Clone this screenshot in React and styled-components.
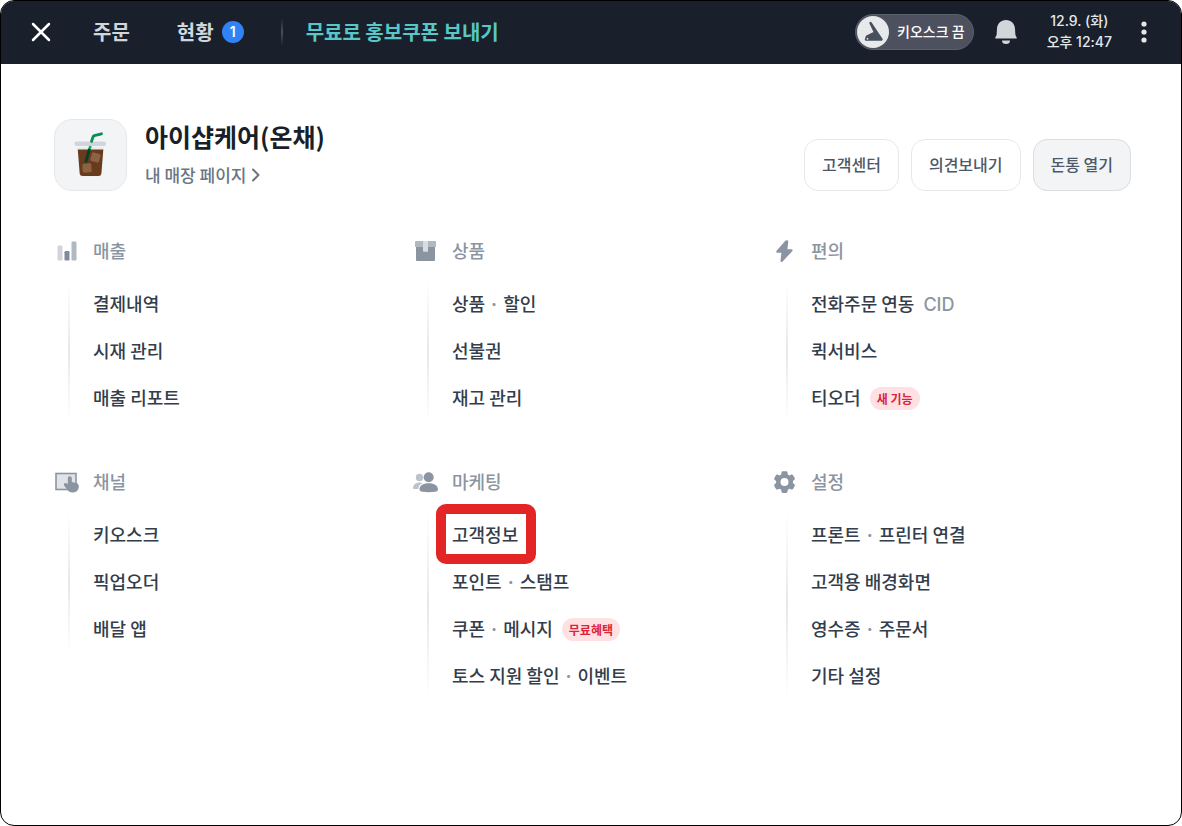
import React from "react";
import styled, { createGlobalStyle } from "styled-components";

const menus = [
    {
        name: "매출",
        icon: "sales",
        items: [{ label: ["결제내역"] }, { label: ["시재 관리"] }, { label: ["매출 리포트"] }],
    },
    {
        name: "상품",
        icon: "product",
        items: [{ label: ["상품", "할인"] }, { label: ["선불권"] }, { label: ["재고 관리"] }],
    },
    {
        name: "편의",
        icon: "bolt",
        items: [
            { label: ["전화주문 연동"], note: "CID" },
            { label: ["퀵서비스"] },
            { label: ["티오더"], badge: "새 기능" },
        ],
    },
    {
        name: "채널",
        icon: "channel",
        items: [{ label: ["키오스크"] }, { label: ["픽업오더"] }, { label: ["배달 앱"] }],
    },
    {
        name: "마케팅",
        icon: "people",
        items: [
            { label: ["고객정보"], marked: true },
            { label: ["포인트", "스탬프"] },
            { label: ["쿠폰", "메시지"], badge: "무료혜택" },
            { label: ["토스 지원 할인", "이벤트"] },
        ],
    },
    {
        name: "설정",
        icon: "gear",
        items: [
            { label: ["프론트", "프린터 연결"] },
            { label: ["고객용 배경화면"] },
            { label: ["영수증", "주문서"] },
            { label: ["기타 설정"] },
        ],
    },
];

const icons = {
    sales: (
        <>
            <rect x="3.500" y="5.500" width="5" height="15" rx="1.200" fill="#d1d5db" />
            <rect x="10.500" y="11" width="5" height="9.500" rx="1.200" fill="#7f8b99" />
            <rect x="17.500" y="1.500" width="5" height="19" rx="1.200" fill="#b0b8c1" />
        </>
    ),
    product: (
        <>
            <path d="M3 7h19v13a1 1 0 0 1-1 1H4a1 1 0 0 1-1-1z" fill="#8b95a1" />
            <path d="M3 1h19a1 1 0 0 1 1 1v5H2V2a1 1 0 0 1 1-1z" fill="#b0b8c1" />
            <path d="M10 1h5v10a.7.7 0 0 1-.7.7h-3.6a.7.7 0 0 1-.7-.7z" fill="#d9dde2" />
        </>
    ),
    bolt: (
        <path
            d="M13.400 .8 4.600 10.800c-.7.900-.3 1.900.9 1.900h3.900l-.9 8c-.1 1.400 1.200 1.900 2.100.9l9.600-10.400c.8-.9.4-2-.8-2h-4l.9-7.500c.1-1.500-1.800-2-2.900-.9z"
            fill="#8b95a1"
        />
    ),
    channel: (
        <>
            <rect x="2" y="2.500" width="20" height="16" fill="#e0e3e8" stroke="#8b95a1" strokeWidth="1.600" />
            <path
                d="M15.800 5.300c1.200 0 2 .8 2 2v3.800l4.300.9c1.700.4 2.700 1.400 2.700 3.100 0 4.200-2.200 6.400-6 6.400-2.800 0-4.400-1-5.700-2.900l-3-4.200c-1-1.500.8-3.100 2.300-2.100l1.400 1V7.300c0-1.200.8-2 2-2z"
                fill="#8b95a1"
            />
        </>
    ),
    people: (
        <>
            <circle cx="6.500" cy="6.500" r="3.700" fill="#bcc3cb" />
            <path d="M0 17.500c0-3.800 2.500-6 6.600-6 1.200 0 2.300.2 3.200.6-2.700 1.200-4.300 3-4.500 5.900H.5z" fill="#bcc3cb" />
            <circle cx="15.700" cy="6.200" r="5" fill="#8b95a1" />
            <path d="M6.500 18.500c0-4 3.400-6.300 9.200-6.300s9.300 2.300 9.300 6.300c0 1.300-1 2-3 2.300-4 .7-9 .6-12.500 0-2-.3-3-1-3-2.300z" fill="#8b95a1" />
        </>
    ),
    gear: (
        <path
            fillRule="evenodd"
            d="M10.800.3h3.400c.7 0 1.200.5 1.300 1.200l.3 1.900c.6.2 1.200.6 1.700 1l1.900-.8c.6-.2 1.300 0 1.600.6l1.700 2.900c.3.600.2 1.300-.3 1.700l-1.500 1.200v2.100l1.500 1.200c.5.4.6 1.100.3 1.700l-1.700 2.900c-.3.600-1 .8-1.600.6l-1.900-.7c-.5.4-1.100.8-1.700 1l-.3 1.900c-.1.700-.6 1.200-1.300 1.200h-3.400c-.7 0-1.200-.5-1.300-1.200l-.3-1.900c-.6-.2-1.200-.6-1.700-1l-1.900.7c-.6.2-1.300 0-1.600-.6L2.300 15c-.3-.6-.2-1.300.3-1.700l1.500-1.200V10L2.600 8.800c-.5-.4-.6-1.100-.3-1.700L4 4.200c.3-.6 1-.8 1.600-.6l1.900.8c.5-.4 1.100-.8 1.700-1l.3-1.900C9.600.8 10.100.3 10.800.3zM12.500 7.100a4 4 0 1 0 0 8 4 4 0 0 0 0-8z"
            fill="#8b95a1"
        />
    ),
};

const DrinkIcon = () => (
    <svg width="36" height="48" viewBox="0 0 36 48" aria-hidden="true">
        <path d="M4 16h27l-2.300 27a3 3 0 0 1-3 2.500H9.300a3 3 0 0 1-3-2.500z" fill="#e9ecef" />
        <path d="M4.800 18.500h25.500l-1.900 24a3 3 0 0 1-3 2.500H9.700a3 3 0 0 1-3-2.500z" fill="#683b1f" />
        <rect x="18" y="22" width="9" height="9" rx="1.500" fill="#8d6243" transform="rotate(15 22.500 26.500)" />
        <rect x="9.500" y="32.500" width="9" height="9" rx="1.500" fill="#8d6243" transform="rotate(-4 14 37)" />
        <rect x="1.500" y="10.500" width="31.500" height="4.500" rx="2.200" fill="#d1d5db" />
        <path d="M18.500 10.500 20 6q.3-1 1.300-1.300L28.500 2.800" fill="none" stroke="#0b8f55" strokeWidth="2.800" strokeLinecap="round" />
        <path d="M17.400 15 16.200 19.500" stroke="#16b167" strokeWidth="2.800" />
        <path d="M16.200 19 13 30.500" stroke="#053f28" strokeWidth="2.800" strokeLinecap="round" />
    </svg>
);

const MenuSection = ({ name, icon, items }) => (
    <section>
        <SectionTitle>
            <svg width="25" height="24" viewBox="0 0 25 22" aria-hidden="true">
                {icons[icon]}
            </svg>
            <SectionName>{name}</SectionName>
        </SectionTitle>
        <SectionBody>
            <Rail />
            <List>
                {items.map(({ label, note, badge, marked }) => (
                    <Item key={label[0]}>
                        <ItemLink href="#" $marked={marked}>
                            {label.map((part, index) => (
                                <React.Fragment key={part}>
                                    {index > 0 && <Dot>·</Dot>}
                                    {part}
                                </React.Fragment>
                            ))}
                        </ItemLink>
                        {note && <Note>{note}</Note>}
                        {badge && <Badge>{badge}</Badge>}
                    </Item>
                ))}
            </List>
        </SectionBody>
    </section>
);

const App = () => {
    return (
        <>
            <GlobalStyle />
            <Frame>
                <Header>
                    <IconButton aria-label="닫기">
                        <svg width="20" height="20" viewBox="0 0 20 20">
                            <path d="M2 2l16 16M18 2 2 18" stroke="#fff" strokeWidth="2.500" strokeLinecap="round" />
                        </svg>
                    </IconButton>
                    <Nav>
                        <NavLink href="#">주문</NavLink>
                        <NavLink href="#">
                            현황 <Count>1</Count>
                        </NavLink>
                    </Nav>
                    <Divider />
                    <NavLink href="#" $promo>
                        무료로 홍보쿠폰 보내기
                    </NavLink>
                    <Tools>
                        <KioskButton>
                            <svg width="32" height="32" viewBox="0 0 32 32" aria-hidden="true">
                                <circle cx="16" cy="16" r="16" fill="#e8e9eb" />
                                <path
                                    d="M13.500 7 24.500 23.500H9L10 20.500 18 16.500z"
                                    fill="#47505e"
                                    stroke="#47505e"
                                    strokeWidth="2.400"
                                    strokeLinejoin="round"
                                />
                                <circle cx="10.500" cy="22.800" r="0.900" fill="#e8e9eb" />
                            </svg>
                            <span>키오스크 끔</span>
                        </KioskButton>
                        <IconButton aria-label="알림">
                            <svg width="24" height="26" viewBox="0 0 24 26">
                                <path
                                    d="M12 1c5.200 0 8.700 3.600 9 8.700l.4 6.300 1.300 2.400c.3.600 0 1.100-.6 1.100H1.900c-.6 0-.9-.5-.6-1.100L2.600 16 3 9.700C3.300 4.600 6.800 1 12 1z"
                                    fill="#d1d6db"
                                />
                                <path d="M8 21.500h8a4 3.500 0 0 1-8 0z" fill="#d1d6db" />
                            </svg>
                        </IconButton>
                        <Clock>
                            12.9. (화)
                            <br />
                            오후 12:47
                        </Clock>
                        <IconButton aria-label="더보기">
                            <svg width="6" height="22" viewBox="0 0 6 22">
                                <circle cx="3" cy="3" r="2.600" fill="#e5e8eb" />
                                <circle cx="3" cy="11" r="2.600" fill="#e5e8eb" />
                                <circle cx="3" cy="19" r="2.600" fill="#e5e8eb" />
                            </svg>
                        </IconButton>
                    </Tools>
                </Header>
                <Main>
                    <Profile>
                        <Logo>
                            <DrinkIcon />
                        </Logo>
                        <div>
                            <StoreName>아이샵케어(온채)</StoreName>
                            <StoreLink href="#">
                                내 매장 페이지
                                <svg width="10" height="14" viewBox="0 0 10 14" aria-hidden="true">
                                    <path d="M2 1.500 7.500 7 2 12.500" fill="none" stroke="#6b7684" strokeWidth="2" strokeLinecap="round" strokeLinejoin="round" />
                                </svg>
                            </StoreLink>
                        </div>
                        <Actions>
                            <ActionButton>고객센터</ActionButton>
                            <ActionButton>의견보내기</ActionButton>
                            <ActionButton $filled>돈통 열기</ActionButton>
                        </Actions>
                    </Profile>
                    <Menus>
                        {menus.map((menu) => (
                            <MenuSection key={menu.name} {...menu} />
                        ))}
                    </Menus>
                </Main>
            </Frame>
        </>
    );
};
export default App;

const GlobalStyle = createGlobalStyle`
    * {
        box-sizing: border-box;
    }
    body {
        margin: 0;
        background: #fff;
        font-family: "Noto Sans CJK KR", sans-serif;
        font-weight: 500;
    }
    button {
        font: inherit;
        cursor: pointer;
    }
    a {
        color: inherit;
        text-decoration: none;
    }
    svg {
        display: block;
        flex-shrink: 0;
    }
`;

const Frame = styled.div`
    min-height: 100vh;
    border: 1px solid #000;
    border-radius: 14px;
    overflow: hidden;
    background: #fff;
`;

const Header = styled.header`
    display: flex;
    align-items: center;
    height: 63px;
    padding: 0 30px 2px;
    background: #19202b;
    color: #d1d6db;
    white-space: nowrap;
`;

const IconButton = styled.button`
    display: flex;
    padding: 0;
    border: 0;
    background: none;
`;

const Nav = styled.nav`
    display: flex;
    gap: 47px;
    margin-left: 42px;
`;

const NavLink = styled.a`
    display: flex;
    align-items: center;
    gap: 8px;
    font-size: 20px;
    font-weight: 700;
    line-height: 28px;
    color: ${({ $promo }) => ($promo ? "#58c7c7" : "inherit")};
`;

const Count = styled.span`
    width: 22px;
    height: 22px;
    border-radius: 50%;
    background: #3182f6;
    color: #fff;
    font: 600 14px/22px Inter, sans-serif;
    text-align: center;
`;

const Divider = styled.span`
    width: 2px;
    height: 28px;
    margin: 0 23px 0 37px;
    background: linear-gradient(transparent, #4a515d, transparent);
`;

const Tools = styled.div`
    display: flex;
    align-items: center;
    margin-left: auto;
    padding-right: 4px;
    gap: 20px;
`;

const KioskButton = styled.button`
    display: flex;
    align-items: center;
    gap: 8px;
    height: 36px;
    padding: 0 8px 0 1px;
    border: 1px solid #5a5f6c;
    border-radius: 18px;
    background: #4d515f;
    color: #fff;
    font-size: 14px;

    span {
        padding-bottom: 2px;
    }
`;

const Clock = styled.time`
    margin: 0 9px;
    padding-bottom: 2px;
    color: #e5e8eb;
    font: 500 14px/21px Inter, "Noto Sans CJK KR", sans-serif;
    text-align: center;
`;

const Main = styled.main`
    padding: 54px 50px 40px 53px;
`;

const Profile = styled.div`
    display: flex;
    align-items: flex-end;
`;

const Logo = styled.div`
    display: flex;
    align-items: center;
    justify-content: center;
    width: 73px;
    height: 72px;
    margin-right: 18px;
    border: 1px solid #e5e8eb;
    border-radius: 18px;
    background: #f2f4f6;
`;

const StoreName = styled.h1`
    margin: 0;
    color: #191f28;
    font-size: 25px;
    font-weight: 700;
    line-height: 36px;
`;

const StoreLink = styled.a`
    display: flex;
    align-items: center;
    gap: 4px;
    margin-top: 5px;
    color: #6b7684;
    font-size: 17px;
    line-height: 32px;
`;

const Actions = styled.div`
    display: flex;
    gap: 12px;
    margin-left: auto;
`;

const ActionButton = styled.button`
    height: 52px;
    padding: 0 17px 2px;
    border: 1px solid ${({ $filled }) => ($filled ? "#d9dee3" : "#e5e8eb")};
    border-radius: 14px;
    background: ${({ $filled }) => ($filled ? "#f2f4f6" : "#fff")};
    color: #4e5968;
    font-size: 16px;
`;

const Menus = styled.div`
    display: grid;
    grid-template-columns: repeat(3, 1fr);
    row-gap: 48px;
    margin-top: 48px;
`;

const SectionTitle = styled.h2`
    display: flex;
    align-items: center;
    gap: 14px;
    height: 24px;
    margin: 0 0 18px;
    color: #8b95a1;
    font-size: 18px;
    font-weight: 500;
    line-height: 24px;
`;

const SectionName = styled.span`
    padding-bottom: 2px;
`;

const SectionBody = styled.div`
    display: flex;
`;

const Rail = styled.span`
    width: 2px;
    margin: 0 23px 0 14px;
    background: linear-gradient(transparent, #e5e8eb 50%, transparent);
`;

const List = styled.ul`
    margin: 0;
    padding: 0;
    list-style: none;
`;

const Item = styled.li`
    display: flex;
    align-items: center;
    height: 47px;
    gap: 9px;
    color: #333d4b;
    font-size: 18px;
    white-space: nowrap;
`;

const ItemLink = styled.a`
    position: relative;
    padding-bottom: 3px;

    &::after {
        content: "";
        display: ${({ $marked }) => ($marked ? "block" : "none")};
        position: absolute;
        inset: -17px -18px -14px -16px;
        border: 10px solid #e32526;
        border-radius: 10px;
    }
`;

const Dot = styled.span`
    display: inline-block;
    width: 18px;
    color: #8b95a1;
    font-family: Inter, sans-serif;
    font-weight: 700;
    text-align: center;
`;

const Note = styled.span`
    color: #8b95a1;
    font-family: Inter, sans-serif;
    font-weight: 500;
`;

const Badge = styled.span`
    padding: 0 7px;
    border-radius: 12px;
    background: #ffe0e3;
    color: #dc2338;
    font-size: 12px;
    font-weight: 700;
    line-height: 23px;
`;
